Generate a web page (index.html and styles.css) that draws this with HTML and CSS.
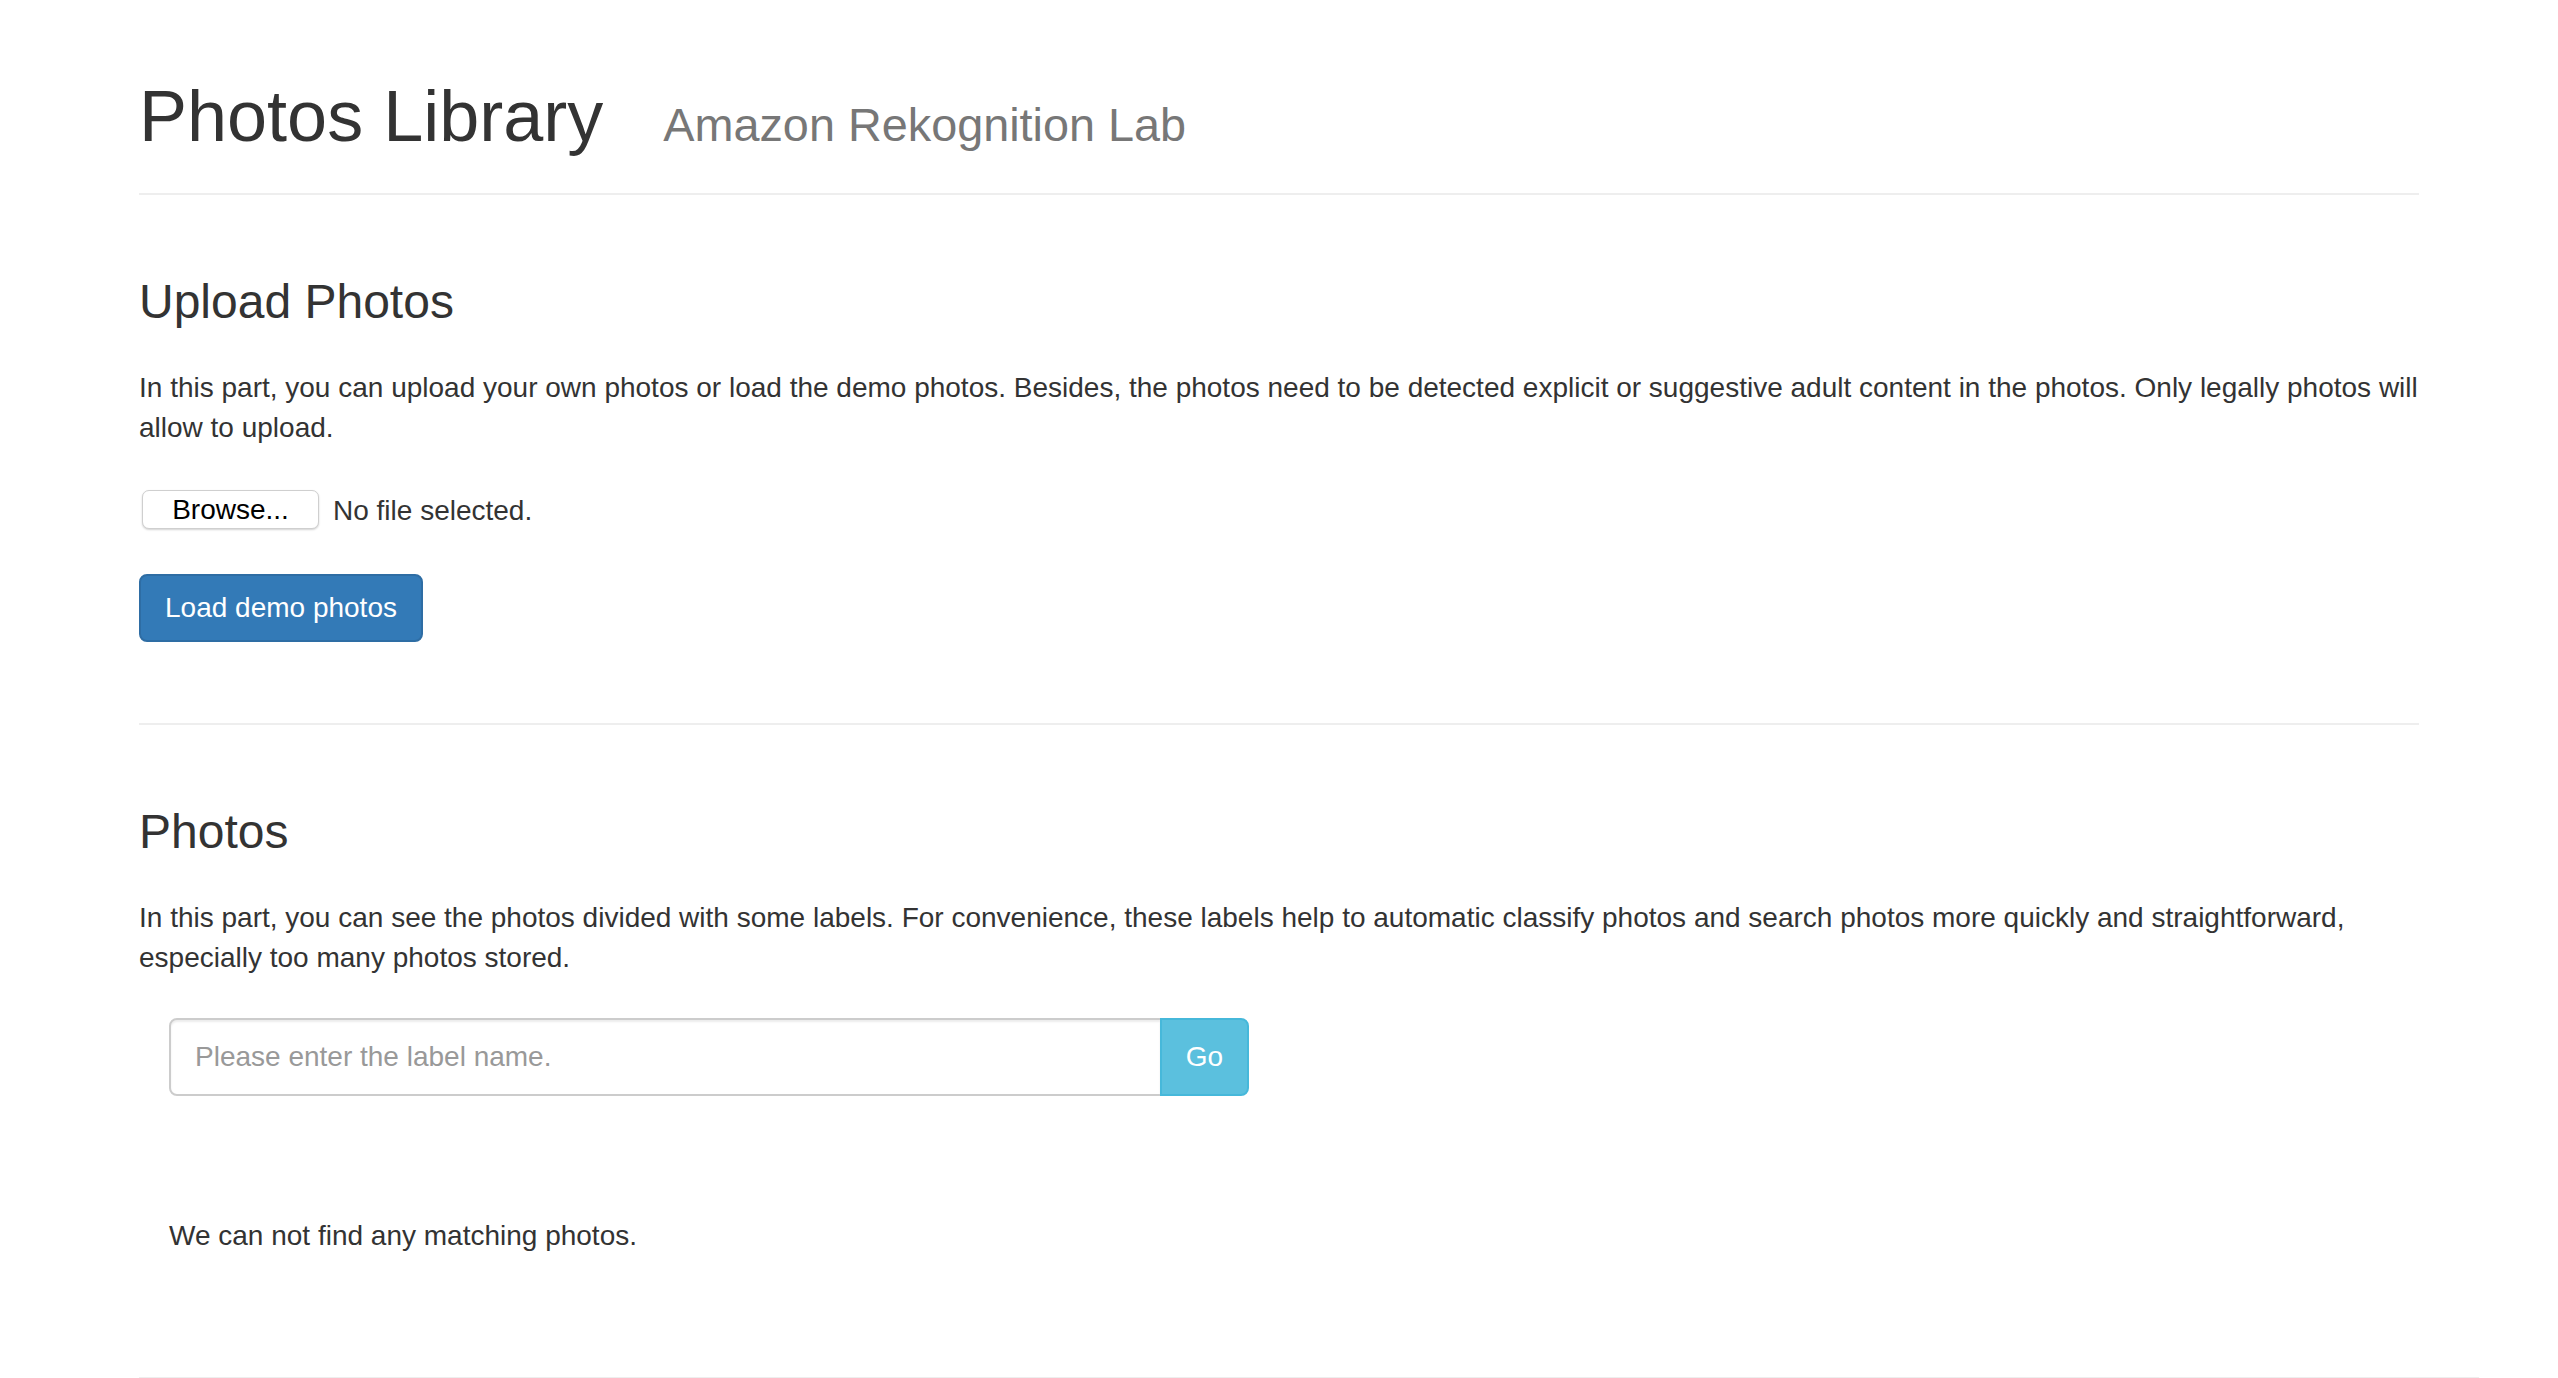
FILE: index.html
```html
<!DOCTYPE html>
<html lang="en">
<head>
<meta charset="utf-8">
<title>Photos Library</title>
<link rel="stylesheet" href="styles.css">
</head>
<body>
<div class="container">
  <div class="page-header">
    <h1 class="title">Photos Library <small class="subtitle">Amazon Rekognition Lab</small></h1>
  </div>

  <section class="section">
    <h3 class="section-title">Upload Photos</h3>
    <p class="text">In this part, you can upload your own photos or load the demo photos. Besides, the photos need to be detected explicit or suggestive adult content in the photos. Only legally photos will allow to upload.</p>
    <div class="file-row">
      <button class="browse" type="button">Browse...</button>
      <span class="file-status">No file selected.</span>
    </div>
    <button class="btn btn-primary" type="button">Load demo photos</button>
  </section>

  <hr class="divider">

  <section class="section">
    <h3 class="section-title">Photos</h3>
    <p class="text">In this part, you can see the photos divided with some labels. For convenience, these labels help to automatic classify photos and search photos more quickly and straightforward, especially too many photos stored.</p>
    <div class="col-half">
      <div class="input-group">
        <input class="search-input" type="text" placeholder="Please enter the label name.">
        <button class="btn btn-info" type="button">Go</button>
      </div>
      <p class="empty">We can not find any matching photos.</p>
    </div>
  </section>

  <hr class="divider divider-wide">
</div>
</body>
</html>
```

FILE: styles.css
```css
html, body {
  margin: 0;
  padding: 0;
  background: #ffffff;
}

body {
  font-family: "Liberation Sans", Arial, Helvetica, sans-serif;
  font-size: 28px;
  line-height: 40px;
  color: #333333;
}

.container {
  width: 2280px;
  margin: 0 auto;
  padding-top: 77px;
}

.page-header {
  padding-bottom: 38px;
  border-bottom: 2px solid #eeeeee;
}

.title {
  margin: 0;
  font-size: 72px;
  line-height: 78px;
  font-weight: normal;
  color: #333333;
}

.subtitle {
  margin-left: 40px;
  font-size: 46.8px;
  line-height: 1;
  color: #777777;
  font-weight: normal;
}

.section-title {
  margin: 80px 0 40px;
  font-size: 48px;
  line-height: 53px;
  font-weight: normal;
  color: #333333;
}

.text {
  margin: 0 0 20px;
}

.file-row {
  display: flex;
  align-items: center;
  height: 39px;
  margin-top: 42px;
  margin-bottom: 45px;
  padding-left: 3px;
}

.browse {
  box-sizing: border-box;
  height: 39px;
  width: 177px;
  padding: 0;
  font-family: "Liberation Sans", Arial, sans-serif;
  font-size: 28px;
  line-height: 37px;
  color: #000000;
  background: #ffffff;
  border: 1px solid #cfcfcf;
  border-radius: 7px;
  box-shadow: 0 1px 2px rgba(0, 0, 0, 0.18);
}

.file-status {
  margin-left: 14px;
  color: #333333;
  line-height: 39px;
  padding-top: 2px;
}

.btn {
  box-sizing: border-box;
  display: inline-block;
  margin: 0;
  padding: 12px 24px;
  font-family: "Liberation Sans", Arial, sans-serif;
  font-size: 28px;
  line-height: 40px;
  font-weight: normal;
  color: #ffffff;
  border: 2px solid transparent;
  border-radius: 8px;
  cursor: pointer;
}

.btn-primary {
  background: #337ab7;
  border-color: #2e6da4;
}

.btn-info {
  background: #5bc0de;
  border-color: #46b8da;
  border-radius: 0 8px 8px 0;
  margin-left: -2px;
  padding-top: 0;
  padding-bottom: 0;
}

.divider {
  height: 2px;
  margin: 81px 0 0;
  border: 0;
  background: #eeeeee;
}

.divider-wide {
  margin-top: 121px;
  margin-right: -60px;
}

.col-half {
  box-sizing: border-box;
  width: 50%;
  padding: 0 30px;
}

.input-group {
  display: flex;
  height: 78px;
  margin-top: 40px;
}

.search-input {
  box-sizing: border-box;
  flex: 1 1 auto;
  min-width: 0;
  height: 78px;
  margin: 0;
  padding: 17px 24px;
  font-family: "Liberation Sans", Arial, sans-serif;
  font-size: 28px;
  line-height: 40px;
  color: #555555;
  background: #ffffff;
  border: 2px solid #cccccc;
  border-radius: 8px 0 0 8px;
  box-shadow: inset 0 2px 2px rgba(0, 0, 0, 0.075);
  outline: none;
}

.search-input::placeholder {
  color: #999999;
  opacity: 1;
}

.empty {
  margin: 120px 0 0;
}
```
